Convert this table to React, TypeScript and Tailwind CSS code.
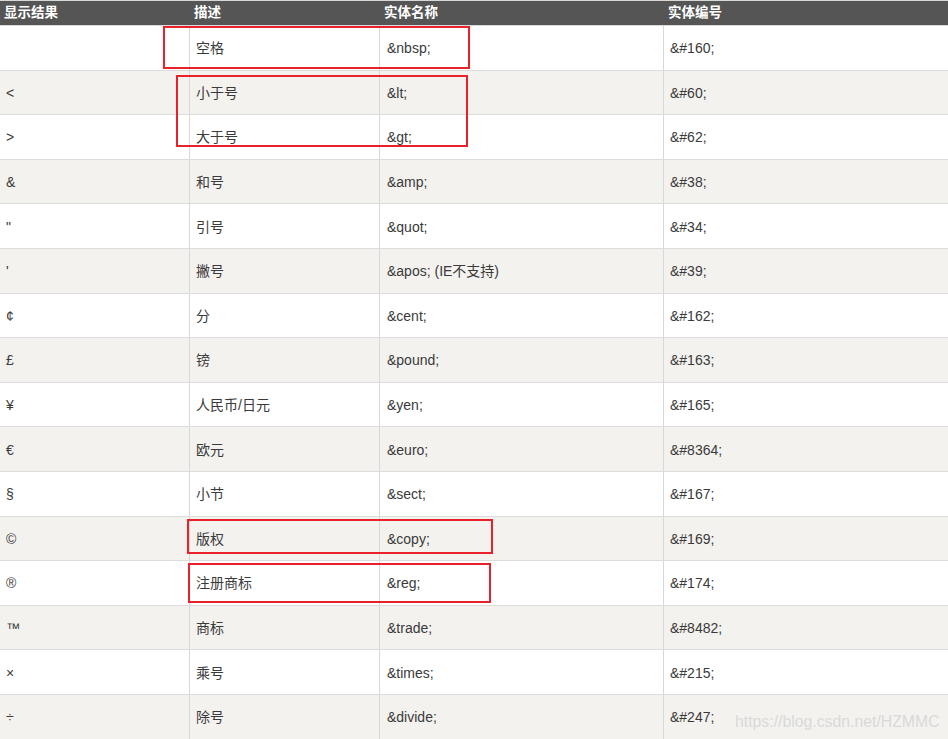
import React from "react";

const rows: [string, string, string, string][] = [
  ["", "空格", "&nbsp;", "&#160;"],
  ["<", "小于号", "&lt;", "&#60;"],
  [">", "大于号", "&gt;", "&#62;"],
  ["&", "和号", "&amp;", "&#38;"],
  ['"', "引号", "&quot;", "&#34;"],
  ["'", "撇号", "&apos; (IE不支持)", "&#39;"],
  ["¢", "分", "&cent;", "&#162;"],
  ["£", "镑", "&pound;", "&#163;"],
  ["¥", "人民币/日元", "&yen;", "&#165;"],
  ["€", "欧元", "&euro;", "&#8364;"],
  ["§", "小节", "&sect;", "&#167;"],
  ["©", "版权", "&copy;", "&#169;"],
  ["®", "注册商标", "&reg;", "&#174;"],
  ["™", "商标", "&trade;", "&#8482;"],
  ["×", "乘号", "&times;", "&#215;"],
  ["÷", "除号", "&divide;", "&#247;"],
];

const font = { fontFamily: '"Liberation Sans", Arial, "Noto Sans CJK SC", sans-serif' };

export default function App() {
  return (
    <div className="relative w-[948px] h-[739px] overflow-hidden bg-white text-[#3a3a3a]" style={font}>
      <div className="flex h-[26px] border-t border-b border-[#d8d8d8] bg-[#555555] text-white font-bold text-[13.5px] items-center">
        <div className="w-[190px] pl-[4px]">显示结果</div>
        <div className="w-[190px] pl-[4px]">描述</div>
        <div className="w-[284px] pl-[4px]">实体名称</div>
        <div className="flex-1 pl-[4px]">实体编号</div>
      </div>
      {rows.map((r, i) => (
        <div
          key={i}
          className={`flex h-[44.6px] border-b border-[#dcdcdc] text-[14px] ${i % 2 === 1 ? "bg-[#f4f2ef]" : "bg-white"}`}
        >
          <div className="w-[190px] shrink-0 border-r border-[#d8d8d8] pl-[6px] pt-[2px] flex items-center">{r[0]}</div>
          <div className="w-[190px] shrink-0 border-r border-[#d8d8d8] pl-[6px] pt-[2px] flex items-center">{r[1]}</div>
          <div className="w-[284px] shrink-0 border-r border-[#d8d8d8] pl-[7px] pt-[2px] flex items-center">{r[2]}</div>
          <div className="flex-1 pl-[6px] pt-[2px] flex items-center">{r[3]}</div>
        </div>
      ))}
      <div className="absolute left-[163px] top-[26px] w-[307px] h-[43px] border-2 border-[#e8212b]" />
      <div className="absolute left-[176px] top-[75px] w-[292px] h-[72px] border-2 border-[#e8212b]" />
      <div className="absolute left-[187px] top-[519px] w-[306px] h-[35px] border-2 border-[#e8212b]" />
      <div className="absolute left-[188px] top-[563px] w-[303px] h-[40px] border-2 border-[#e8212b]" />
      <div className="absolute left-[735px] top-[710px] text-[15.8px] text-[#d9d9d9]">
        https://blog.csdn.net/HZMMC
      </div>
    </div>
  );
}
